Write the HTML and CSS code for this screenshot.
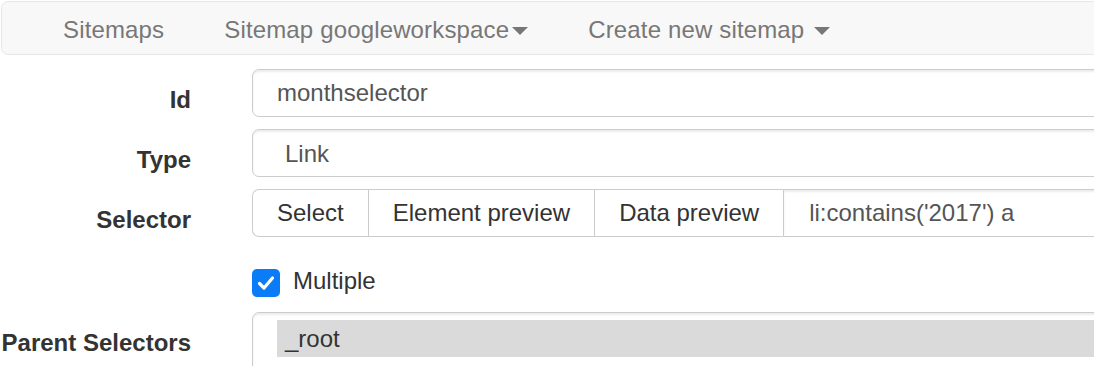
FILE: index.html
```html
<!DOCTYPE html>
<html>
    <head>
        <title>Web Scraper - Selector</title>
        <link rel="stylesheet" href="styles.css">
    </head>
    <body>
        <div class="page">
            <nav class="navbar">
                <a class="nav-item" href="#">Sitemaps</a>
                <a class="nav-item" href="#">Sitemap googleworkspace<span class="caret tight"></span></a>
                <a class="nav-item" href="#">Create new sitemap <span class="caret"></span></a>
            </nav>

            <form class="selector-form">
                <div class="form-row">
                    <label class="row-label" for="selector-id">Id</label>
                    <input type="text" id="selector-id" class="field" value="monthselector">
                </div>

                <div class="form-row">
                    <label class="row-label" for="selector-type">Type</label>
                    <select id="selector-type" class="field field-select">
                        <option>Link</option>
                    </select>
                </div>

                <div class="form-row">
                    <label class="row-label" for="selector-css">Selector</label>
                    <div class="input-group">
                        <button type="button" class="btn">Select</button>
                        <button type="button" class="btn">Element preview</button>
                        <button type="button" class="btn">Data preview</button>
                        <input type="text" id="selector-css" class="field group-field" value="li:contains('2017') a">
                    </div>
                </div>

                <div class="form-row check-row">
                    <span></span>
                    <label class="check">
                        <span class="check-box">
                            <svg width="28" height="28" viewBox="0 0 28 28">
                                <path d="M7.5 14.5 L12 19 L20.5 9" fill="none" stroke="#fff" stroke-width="3.2" stroke-linecap="round" stroke-linejoin="round"/>
                            </svg>
                        </span>
                        Multiple
                    </label>
                </div>

                <div class="form-row">
                    <label class="row-label">Parent Selectors</label>
                    <div class="field multi-list">
                        <div class="multi-option selected">_root</div>
                    </div>
                </div>
            </form>
        </div>
    </body>
</html>
```

FILE: styles.css
```css
body {
    font-family: "Liberation Sans", Arial, sans-serif;
    background-color: #fff;
    color: #333;
    margin: 0;
    padding: 0;
    overflow: hidden;
}

.page {
    width: 1240px;
    padding: 1px 0 0 1px;
}

/* top navigation */
.navbar {
    display: flex;
    align-items: center;
    height: 54px;
    box-sizing: border-box;
    padding: 3px 0 0 31px;
    background-color: #f8f8f8;
    border: 1px solid #e7e7e7;
    border-radius: 7px;
}

.nav-item {
    display: flex;
    align-items: center;
    padding: 0 30px;
    font-size: 24px;
    line-height: 30px;
    letter-spacing: 0.15px;
    color: #777;
    text-decoration: none;
}

.caret {
    display: inline-block;
    width: 0;
    height: 0;
    margin-left: 10px;
    margin-top: 2px;
    border-top: 8px solid #777;
    border-left: 8px solid transparent;
    border-right: 8px solid transparent;
}

.caret.tight {
    margin-left: 3px;
}

/* form */
.selector-form {
    margin-top: 14px;
}

.form-row {
    display: grid;
    grid-template-columns: 190px 1fr;
    column-gap: 61px;
    margin-bottom: 12px;
}

.row-label {
    text-align: right;
    font-weight: bold;
    font-size: 24px;
    line-height: 28px;
    padding-top: 17px;
}

.field {
    box-sizing: border-box;
    height: 48px;
    width: 100%;
    padding: 0 24px;
    font-family: inherit;
    font-size: 24px;
    color: #555;
    background-color: #fff;
    border: 1px solid #ccc;
    border-radius: 7px;
    box-shadow: inset 0 2px 2px rgba(0, 0, 0, 0.075);
    outline: none;
}

.field-select {
    -webkit-appearance: none;
    appearance: none;
    padding-left: 32px;
}

.input-group {
    display: flex;
    height: 48px;
}

.btn {
    box-sizing: border-box;
    height: 48px;
    padding: 0 24px;
    font-family: inherit;
    font-size: 24px;
    color: #333;
    background-color: #fff;
    border: 1px solid #ccc;
    border-right: none;
    border-radius: 0;
    white-space: nowrap;
}

.btn:first-child {
    border-radius: 7px 0 0 7px;
}

.group-field {
    flex: 1;
    border-radius: 0 7px 7px 0;
    padding-left: 25px;
}

/* checkbox row */
.check-row {
    padding-top: 20px;
    margin-bottom: 15px;
}

.check {
    display: flex;
    align-items: flex-start;
    gap: 13px;
    font-size: 24px;
    line-height: 24px;
    color: #333;
}

.check-box {
    display: block;
    width: 28px;
    height: 28px;
    background-color: #0b7cf8;
    border-radius: 5px;
}

.check-box svg {
    display: block;
}

/* multi select list */
.multi-list {
    height: 80px;
    padding: 7px 0 0 24px;
    border-bottom-left-radius: 0;
    border-bottom-right-radius: 0;
}

.multi-option {
    height: 37px;
    line-height: 37px;
    padding-left: 8px;
    color: #333;
}

.multi-option.selected {
    background-color: #dadada;
}
```
